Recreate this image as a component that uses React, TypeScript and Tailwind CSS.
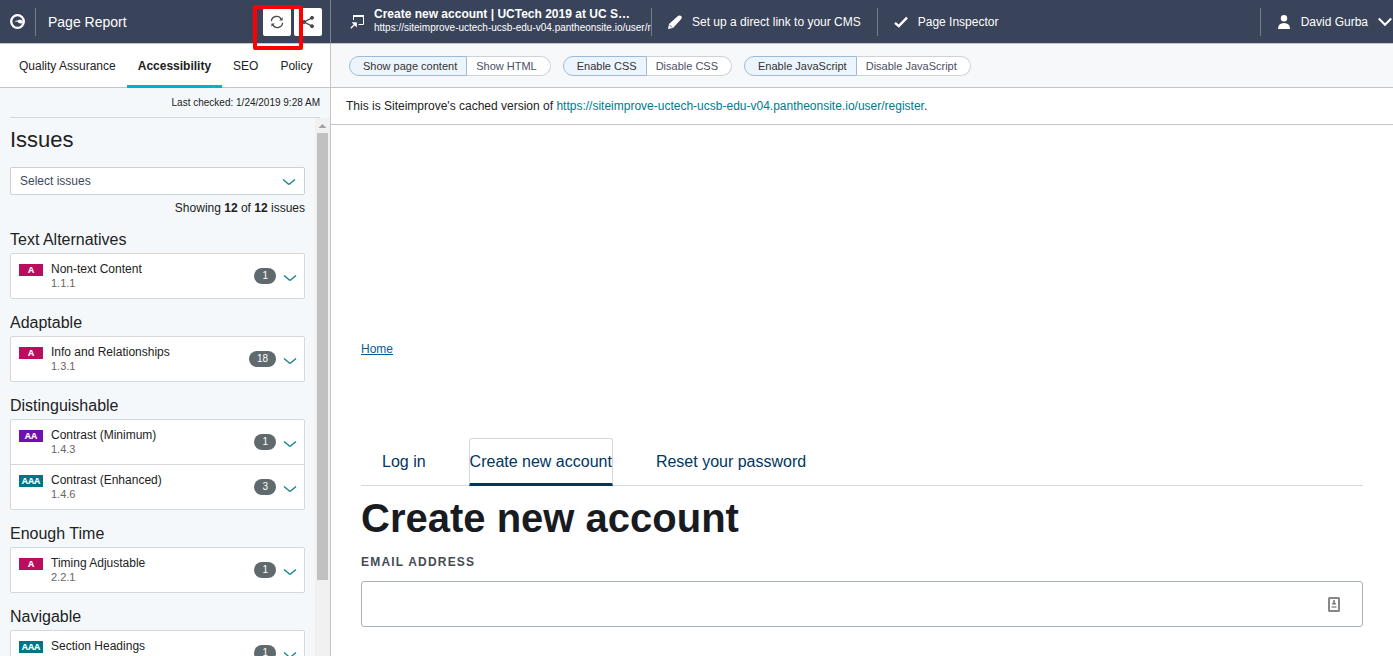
import React from "react";

type Level = "A" | "AA" | "AAA";
type Issue = { level: Level; title: string; criterion: string; count: number };
type Section = { name: string; issues: Issue[] };

const sections: Section[] = [
  { name: "Text Alternatives", issues: [{ level: "A", title: "Non-text Content", criterion: "1.1.1", count: 1 }] },
  { name: "Adaptable", issues: [{ level: "A", title: "Info and Relationships", criterion: "1.3.1", count: 18 }] },
  {
    name: "Distinguishable",
    issues: [
      { level: "AA", title: "Contrast (Minimum)", criterion: "1.4.3", count: 1 },
      { level: "AAA", title: "Contrast (Enhanced)", criterion: "1.4.6", count: 3 },
    ],
  },
  { name: "Enough Time", issues: [{ level: "A", title: "Timing Adjustable", criterion: "2.2.1", count: 1 }] },
  { name: "Navigable", issues: [{ level: "AAA", title: "Section Headings", criterion: "2.4.10", count: 1 }] },
];

const levelColor: Record<Level, string> = {
  A: "bg-[#b90e5d]",
  AA: "bg-[#7110b0]",
  AAA: "bg-[#00758a]",
};

function Chevron({ className }: { className?: string }) {
  return (
    <svg viewBox="0 0 14 8" className={className} width="14" height="8" fill="none" stroke="#0b8494" strokeWidth="1.3" aria-hidden="true">
      <path d="M1 1.5 L5.8 5.6 Q7 6.4 8.2 5.6 L13 1.5" />
    </svg>
  );
}

function Divider() {
  return <span className="h-7 w-px shrink-0 bg-[#757c8b]" />;
}

function IssueRow({ issue }: { issue: Issue }) {
  return (
    <li className="border-t border-[#d5d8da] first:border-t-0">
      <button type="button" className="flex h-11 w-full items-start pt-2 pr-[7px] pl-2 text-left">
        <span className={`mt-0.5 h-3 w-6 shrink-0 text-center font-['Open_Sans',sans-serif] text-[9px] leading-3 font-bold text-white ${levelColor[issue.level]}`}>
          {issue.level}
        </span>
        <span className="ml-2 flex flex-1 flex-col">
          <span className="text-xs leading-[14px] text-[#222]">{issue.title}</span>
          <span className="text-[11px] leading-[14px] text-[#666]">{issue.criterion}</span>
        </span>
        <span className="mt-1.5 rounded-full bg-[#606a6e] px-2 text-[10px] leading-4 text-white">{issue.count}</span>
        <Chevron className="mt-3 ml-[7px]" />
      </button>
    </li>
  );
}

function Toggle({ on, off }: { on: string; off: string }) {
  return (
    <div className="flex h-5 text-[11px] leading-[18px]">
      <button type="button" aria-pressed="true" className="rounded-l-full border border-[#9dbbd9] bg-[#ecf5fd] pr-[9px] pl-[13px] text-[#333]">
        {on}
      </button>
      <button type="button" aria-pressed="false" className="rounded-r-full border border-l-0 border-[#ced3d9] bg-white pr-[13px] pl-[9px] text-[#4a4f63]">
        {off}
      </button>
    </div>
  );
}

function Sidebar() {
  return (
    <aside className="flex w-[331px] shrink-0 flex-col border-r border-[#c3c5c8] bg-[#f4f8fb]">
      <header className="-mr-px flex h-11 shrink-0 items-center border-r border-b border-r-[#7c8290] border-b-[#c3c5c8] bg-[#39435a] pr-2 pl-[10px]">
        <svg width="15" height="15" viewBox="0 0 15 15" aria-hidden="true">
          <circle cx="7.5" cy="7.5" r="6.3" fill="none" stroke="#fff" strokeWidth="2.3" />
          <path d="M4.2 7.4 L10.2 5.4 L13 7 L12 9.5 L9 9.3 L7.6 7.7Z" fill="#fff" />
        </svg>
        <span className="ml-[10px] flex">
          <Divider />
        </span>
        <h1 className="ml-3 flex-1 text-sm text-white">Page Report</h1>
        <div className="relative flex gap-[3px]">
          <button type="button" aria-label="Recheck page" className="flex size-7 items-center justify-center rounded-xs bg-white">
            <svg width="14" height="14" viewBox="0 0 14 14" fill="none" stroke="#4a4a4a" strokeWidth="1.3" aria-hidden="true">
              <path d="M1.4 6.2 A5.2 5.2 0 0 1 11.2 4.2" />
              <path d="M12.6 7.8 A5.2 5.2 0 0 1 2.8 9.8" />
              <path d="M12.6 2.2 V5.6 H9.2Z" fill="#4a4a4a" stroke="none" />
              <path d="M1.4 11.8 V8.4 H4.8Z" fill="#4a4a4a" stroke="none" />
            </svg>
          </button>
          <button type="button" aria-label="Share" className="flex size-7 items-center justify-center rounded-xs bg-white">
            <svg width="14" height="14" viewBox="0 0 14 14" fill="#4a4a4a" stroke="#4a4a4a" aria-hidden="true">
              <path d="M11 2.8 L3 7 L11 11.2" fill="none" strokeWidth="1.3" />
              <circle cx="11" cy="2.8" r="1.5" />
              <circle cx="3" cy="7" r="1.5" />
              <circle cx="11" cy="11.2" r="1.5" />
            </svg>
          </button>
          <span className="pointer-events-none absolute -top-[3px] -left-[10px] h-[45px] w-[50px] rounded-xs border-4 border-[#fe0000]" />
        </div>
      </header>

      <nav className="flex h-11 shrink-0 border-b border-[#c3c5c8] bg-white pl-2 text-xs leading-11 text-[#222]">
        <a href="#qa" className="px-[11px]">Quality Assurance</a>
        <a href="#accessibility" aria-current="page" className="-mb-px h-11 border-b-3 border-[#00b0d0] px-[11px] font-bold">
          Accessibility
        </a>
        <a href="#seo" className="px-[11px]">SEO</a>
        <a href="#policy" className="px-[11px]">Policy</a>
      </nav>

      <p className="mx-[10px] h-[30px] shrink-0 border-b border-[#d5d8da] text-right text-[10px] leading-[29px] text-[#222]">
        Last checked: 1/24/2019 9:28 AM
      </p>

      <div className="flex min-h-0 flex-1">
        <div className="flex-1 overflow-hidden px-[10px] pt-2">
          <h2 className="mb-[13px] text-[22px] leading-7 text-[#222]">Issues</h2>
          <div className="relative">
            <select aria-label="Select issues" className="block h-7 w-full appearance-none rounded-xs border border-[#c9d2d8] bg-white pl-[9px] text-xs text-[#3d4760]">
              <option>Select issues</option>
            </select>
            <Chevron className="pointer-events-none absolute top-[11px] right-[9px]" />
          </div>
          <p className="mt-[3px] mb-3 text-right text-xs leading-5 text-[#222]">
            Showing <b>12</b> of <b>12</b> issues
          </p>
          {sections.map((section) => (
            <section key={section.name} className="mb-[14px]">
              <h3 className="mb-[3px] text-base leading-5 text-[#222]">{section.name}</h3>
              <ul className="rounded-xs border border-[#d5d8da] bg-white">
                {section.issues.map((issue) => (
                  <IssueRow key={issue.criterion} issue={issue} />
                ))}
              </ul>
            </section>
          ))}
        </div>
        <div className="flex w-[15px] flex-col items-center bg-[#f1f1f1]" aria-hidden="true">
          <svg width="15" height="15" viewBox="0 0 15 15" className="shrink-0">
            <path d="M3.5 10 L7.5 6 L11.5 10Z" fill="#a3a3a3" />
          </svg>
          <div className="h-[83%] w-[11px] bg-[#c1c1c1]" />
        </div>
      </div>
    </aside>
  );
}

function TopBar() {
  return (
    <header className="flex h-11 shrink-0 items-center border-b border-[#c3c5c8] bg-[#39435a] text-xs text-white">
      <a href="#page" className="ml-[19px] flex w-[301px] shrink-0 items-center">
        <svg width="15" height="15" viewBox="0 0 15 15" fill="none" stroke="#fff" className="shrink-0" aria-hidden="true">
          <path d="M3.5 6 V2 H13.5 V10.5 H8.5" />
          <path d="M3 2 H14" strokeWidth="2" />
          <path d="M0.8 14.2 L4.5 10.5" strokeWidth="1.3" />
          <path d="M1.6 8.2 H6.8 V13.4Z" fill="#fff" stroke="none" />
        </svg>
        <span className="ml-[9px] flex min-w-0 flex-col overflow-hidden whitespace-nowrap">
          <span className="leading-[13px] font-bold">Create new account | UCTech 2019 at UC S…</span>
          <span className="text-[10px] leading-[14px]">https://siteimprove-uctech-ucsb-edu-v04.pantheonsite.io/user/register</span>
        </span>
      </a>
      <Divider />
      <a href="#cms" className="ml-4 flex items-center gap-[10px]">
        <svg width="14" height="14" viewBox="0 0 14 14" fill="#fff" aria-hidden="true">
          <path d="M1 9 L9.4 1.4 Q11.4 -0.3 13.2 1 Q14.4 2.8 12.8 4.6 L5 13 L0 14Z" />
          <path d="M1.4 9.8 L4.2 12.6" stroke="#39435a" strokeWidth="0.8" />
        </svg>
        Set up a direct link to your CMS
      </a>
      <span className="ml-4 flex">
        <Divider />
      </span>
      <a href="#inspector" className="ml-4 flex items-center gap-[10px]">
        <svg width="14" height="14" viewBox="0 0 14 14" fill="none" stroke="#fff" strokeWidth="2.4" aria-hidden="true">
          <path d="M1 7.8 L4.8 11.2 L13 2.6" />
        </svg>
        Page Inspector
      </a>
      <span className="ml-auto flex">
        <Divider />
      </span>
      <button type="button" className="ml-4 flex items-center">
        <svg width="14" height="16" viewBox="0 0 14 16" fill="#fff" aria-hidden="true">
          <circle cx="7" cy="4.2" r="3.2" />
          <path d="M1 15 Q1 9 7 9 Q13 9 13 15Z" />
        </svg>
        <span className="ml-[10px]">David Gurba</span>
        <svg width="14" height="10" viewBox="0 0 14 10" fill="none" stroke="#fff" strokeWidth="2" className="mt-px ml-[10px] mr-px" aria-hidden="true">
          <path d="M0.8 1.5 L7 7.8 L13.2 1.5" />
        </svg>
      </button>
    </header>
  );
}

function CachedPage() {
  return (
    <div className="px-[30px] pt-[216px]">
      <a href="#home" className="block w-fit text-xs leading-4 text-[#0a5a96] underline">Home</a>
      <nav className="mt-[81px] flex h-12 gap-[22px] border-b border-[#d8d8d8] text-base leading-12 text-[#003660]">
        <a href="#login" className="px-[21px]">Log in</a>
        <a href="#register" aria-current="page" className="-mb-px h-12 rounded-t-[3px] border border-b-3 border-[#d8d8d8] border-b-[#003660] leading-[46px]">
          Create new account
        </a>
        <a href="#password" className="px-[21px]">Reset your password</a>
      </nav>
      <h2 className="mt-2 text-[40px] leading-12 font-bold text-[#181b1f]">Create new account</h2>
      <label htmlFor="email" className="mt-3 block text-xs leading-4 font-bold tracking-widest text-[#444b55]">
        EMAIL ADDRESS
      </label>
      <div className="relative mt-[11px]">
        <input id="email" type="email" className="block h-[46px] w-full rounded-[3px] border border-[#a8b2bb] bg-white px-3" />
        <svg width="12" height="15" viewBox="0 0 12 15" className="pointer-events-none absolute top-4 right-[23px]" aria-hidden="true">
          <rect x="1" y="1" width="10" height="13" rx="0.5" fill="#fff" stroke="#868686" strokeWidth="2" />
          <circle cx="6" cy="4" r="1.1" fill="#777" />
          <path d="M3.8 7.6 Q4 5 6 5 Q8 5 8.2 7.6Z" fill="#777" />
          <path d="M3.5 10 H8.5" stroke="#aaa" strokeWidth="2" />
        </svg>
      </div>
    </div>
  );
}

export default function App() {
  return (
    <div className="flex h-screen overflow-hidden bg-white font-['Liberation_Sans',Arial,sans-serif]">
      <Sidebar />
      <main className="flex min-w-0 flex-1 flex-col">
        <TopBar />
        <div className="flex h-11 shrink-0 items-center gap-3 border-b border-[#c3c5c8] bg-[#f6f8fa] pl-[18px]">
          <Toggle on="Show page content" off="Show HTML" />
          <Toggle on="Enable CSS" off="Disable CSS" />
          <Toggle on="Enable JavaScript" off="Disable JavaScript" />
        </div>
        <p className="h-[37px] shrink-0 border-b border-[#c3c5c8] pl-[15px] text-xs leading-9 text-[#222]">
          This is Siteimprove's cached version of{" "}
          <a href="#cached" className="text-[#007a8c]">
            https://siteimprove-uctech-ucsb-edu-v04.pantheonsite.io/user/register
          </a>
          .
        </p>
        <CachedPage />
      </main>
    </div>
  );
}
